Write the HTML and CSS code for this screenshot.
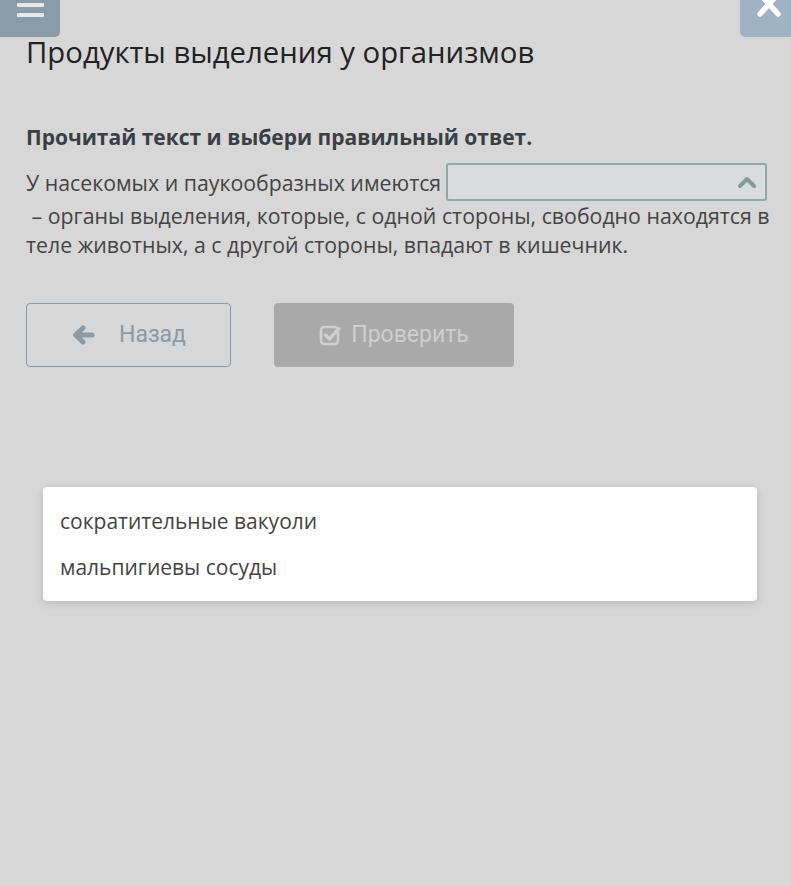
FILE: index.html
```html
<!DOCTYPE html>
<html lang="ru">
<head>
    <meta charset="UTF-8">
    <meta name="viewport" content="width=device-width, initial-scale=1.0">
    <title>Продукты выделения у организмов</title>
    <link rel="stylesheet" href="styles.css">
</head>
<body>
    <button class="menu-btn" aria-label="Меню">
        <svg width="28" height="20" viewBox="0 0 28 20">
            <rect x="0" y="3" width="27" height="4" rx="1" fill="#e4e9ec"/>
            <rect x="0" y="13" width="27" height="4" rx="1" fill="#e4e9ec"/>
        </svg>
    </button>
    <button class="close-btn" aria-label="Закрыть">
        <svg width="26" height="22" viewBox="0 0 26 22">
            <path d="M4 -6 L22 14 M22 -6 L4 14" stroke="#ffffff" stroke-width="5.5" stroke-linecap="round"/>
        </svg>
    </button>

    <main class="task">
        <h1 class="task-title">Продукты выделения у организмов</h1>

        <p class="task-hint">Прочитай текст и выбери правильный ответ.</p>

        <p class="task-text">
            У насекомых и паукообразных имеются <span class="gap-select"><svg class="caret" width="20" height="14" viewBox="0 0 20 14"><path d="M3 11 L10 4 L17 11" fill="none" stroke="#7e9c9c" stroke-width="4" stroke-linecap="round" stroke-linejoin="round"/></svg></span> &nbsp;– органы выделения, которые, с одной стороны, свободно находятся в теле животных, а с другой стороны, впадают в кишечник.
        </p>

        <div class="task-actions">
            <button class="btn btn-back">
                <svg width="24" height="20" viewBox="0 0 24 20">
                    <path d="M21 10 H6 M12 3 L4.5 10 L12 17" fill="none" stroke="#8a9aa6" stroke-width="5" stroke-linecap="round" stroke-linejoin="round"/>
                </svg>
                <span>Назад</span>
            </button>
            <button class="btn btn-check" disabled>
                <svg width="24" height="22" viewBox="0 0 24 22">
                    <rect x="2" y="3" width="17" height="17" rx="3.5" fill="none" stroke="#cfcfcf" stroke-width="2.6"/>
                    <path d="M6.5 11 L10.5 15 L20 4.5" fill="none" stroke="#cfcfcf" stroke-width="3.4" stroke-linecap="round" stroke-linejoin="round"/>
                </svg>
                <span>Проверить</span>
            </button>
        </div>

        <ul class="options">
            <li class="option">сократительные вакуоли</li>
            <li class="option">мальпигиевы сосуды</li>
        </ul>
    </main>
</body>
</html>
```

FILE: styles.css
```css
* {
    margin: 0;
    padding: 0;
    box-sizing: border-box;
}

body {
    font-family: 'Open Sans', 'Noto Sans', sans-serif;
    background-color: #d7d7d7;
    color: #444;
    min-height: 886px;
}

/* corner buttons */
.menu-btn,
.close-btn {
    position: absolute;
    top: 0;
    height: 37px;
    border: none;
    display: flex;
    justify-content: center;
    align-items: flex-start;
    cursor: pointer;
}

.menu-btn {
    left: 0;
    width: 60px;
    background-color: #8b9ca8;
    border-bottom-right-radius: 5px;
    padding-left: 2px;
}

.close-btn {
    right: 0;
    width: 51px;
    background-color: #9fb3c4;
    border-bottom-left-radius: 5px;
    padding-left: 7px;
}

.task {
    padding: 35px 20px 0 26px;
}

.task-title {
    font-size: 29.3px;
    font-weight: 400;
    line-height: 1.2;
    color: #222;
}

.task-hint {
    margin-top: 53px;
    font-size: 21px;
    font-weight: 700;
    color: #3a3f44;
    line-height: 1.4;
}

.task-text {
    margin-top: 15px;
    font-size: 21.3px;
    line-height: 29px;
    color: #444;
}

.gap-select {
    display: inline-block;
    vertical-align: middle;
    width: 321px;
    height: 38px;
    margin-top: -6px;
    margin-left: -1px;
    border: 2px solid #8ea8a8;
    border-radius: 3px;
    background-color: #d9dcdc;
    position: relative;
}

.caret {
    position: absolute;
    right: 8px;
    top: 10px;
}

.task-actions {
    display: flex;
    gap: 43px;
    margin-top: 44px;
}

.btn {
    height: 64px;
    border-radius: 4px;
    font-family: 'Roboto', 'Open Sans', sans-serif;
    font-size: 23px;
    display: flex;
    align-items: center;
    justify-content: center;
}

.btn-back {
    width: 205px;
    background: transparent;
    border: 1px solid #8a9aa6;
    color: #8a9aa6;
    gap: 24px;
    cursor: pointer;
}

.btn-check {
    width: 240px;
    background-color: #a9a9a9;
    border: none;
    color: #cfcfcf;
    gap: 8px;
}

.options {
    list-style-type: none;
    margin: 120px 14px 0 17px;
    background-color: white;
    border-radius: 4px;
    box-shadow: 0 2px 8px rgba(0,0,0,0.15);
    padding: 11px 17px;
}

.option {
    height: 46px;
    display: flex;
    align-items: center;
    font-size: 21px;
    color: #444;
}
```
